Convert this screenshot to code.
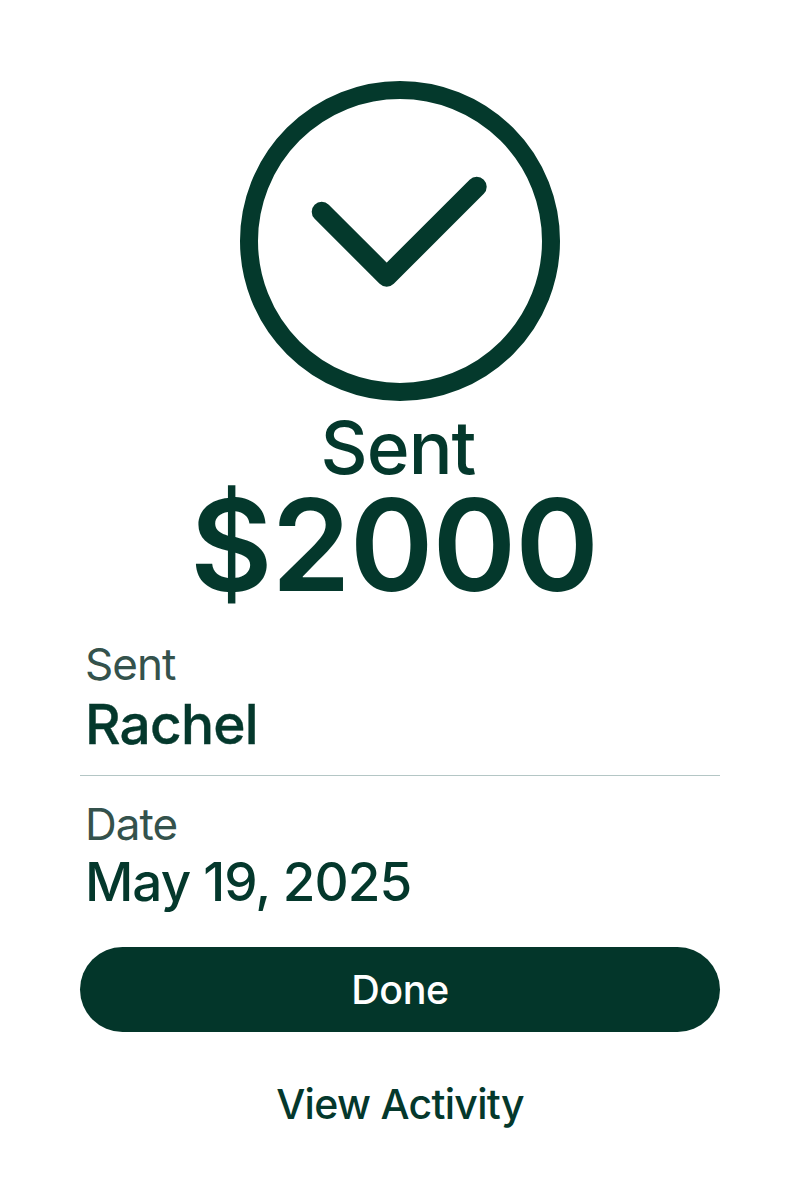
<main class="page">
  <svg class="icon" viewBox="0 0 322 322" width="322" height="322" aria-hidden="true">
    <circle cx="161" cy="161" r="151" class="ring" />
    <path d="M82.7 131.7 L147.7 196.7 L237.7 106.7" class="check" />
  </svg>
  <div class="status">Sent</div>
  <div class="amount">$2000</div>

  <section class="details">
    <div class="row first">
      <div class="label">Sent</div>
      <div class="value strong">Rachel</div>
    </div>
    <div class="row second">
      <div class="label">Date</div>
      <div class="value">May 19, 2025</div>
    </div>
  </section>

  <button class="done">Done</button>
  <button class="activity">View Activity</button>
</main>

<style>
  :global(body) { margin: 0; background: #fff; }
  .page {
    width: 800px;
    height: 1200px;
    box-sizing: border-box;
    padding-top: 80px;
    display: flex;
    flex-direction: column;
    align-items: center;
    font-family: Inter, "Liberation Sans", sans-serif;
    font-optical-sizing: none;
    color: #04382c;
  }
  .icon { display: block; flex: none; }
  .ring { fill: none; stroke: #04392c; stroke-width: 18; }
  .check { fill: none; stroke: #04392c; stroke-width: 20; stroke-linecap: round; stroke-linejoin: round; }
  .status { font-size: 73px; line-height: 62px; margin: 15px 4px 0 0; letter-spacing: -1px; font-weight: 500; }
  .amount { font-size: 127px; line-height: 130px; margin: 1px 12px 0 0; letter-spacing: -1px; font-weight: 600; }
  .details { width: 640px; margin-top: 29px; }
  .row { padding: 0 5px; }
  .first { border-bottom: 1px solid #b4c6c5; padding-bottom: 18px; }
  .second { padding-top: 23px; }
  .label { font-size: 44px; line-height: 50px; color: #34524c; letter-spacing: -1px; }
  .value { font-size: 53px; line-height: 66px; letter-spacing: -1px; margin-top: 0; font-weight: 500; }
  .strong { font-size: 55px; font-weight: 500; letter-spacing: -0.8px; margin-top: 2px; -webkit-text-stroke: 0.4px #04382c; }
  button { font-family: inherit; border: 0; cursor: pointer; }
  .done {
    width: 640px; height: 85px; margin-top: 32px;
    border-radius: 42.5px; background: #03362a; color: #fff;
    font-size: 39.5px; font-weight: 500; letter-spacing: -0.5px;
  }
  .activity {
    margin-top: 46px; background: none; color: #04382c;
    font-size: 41px; font-weight: 500; padding: 0; line-height: 52px; letter-spacing: -0.7px;
  }
</style>
